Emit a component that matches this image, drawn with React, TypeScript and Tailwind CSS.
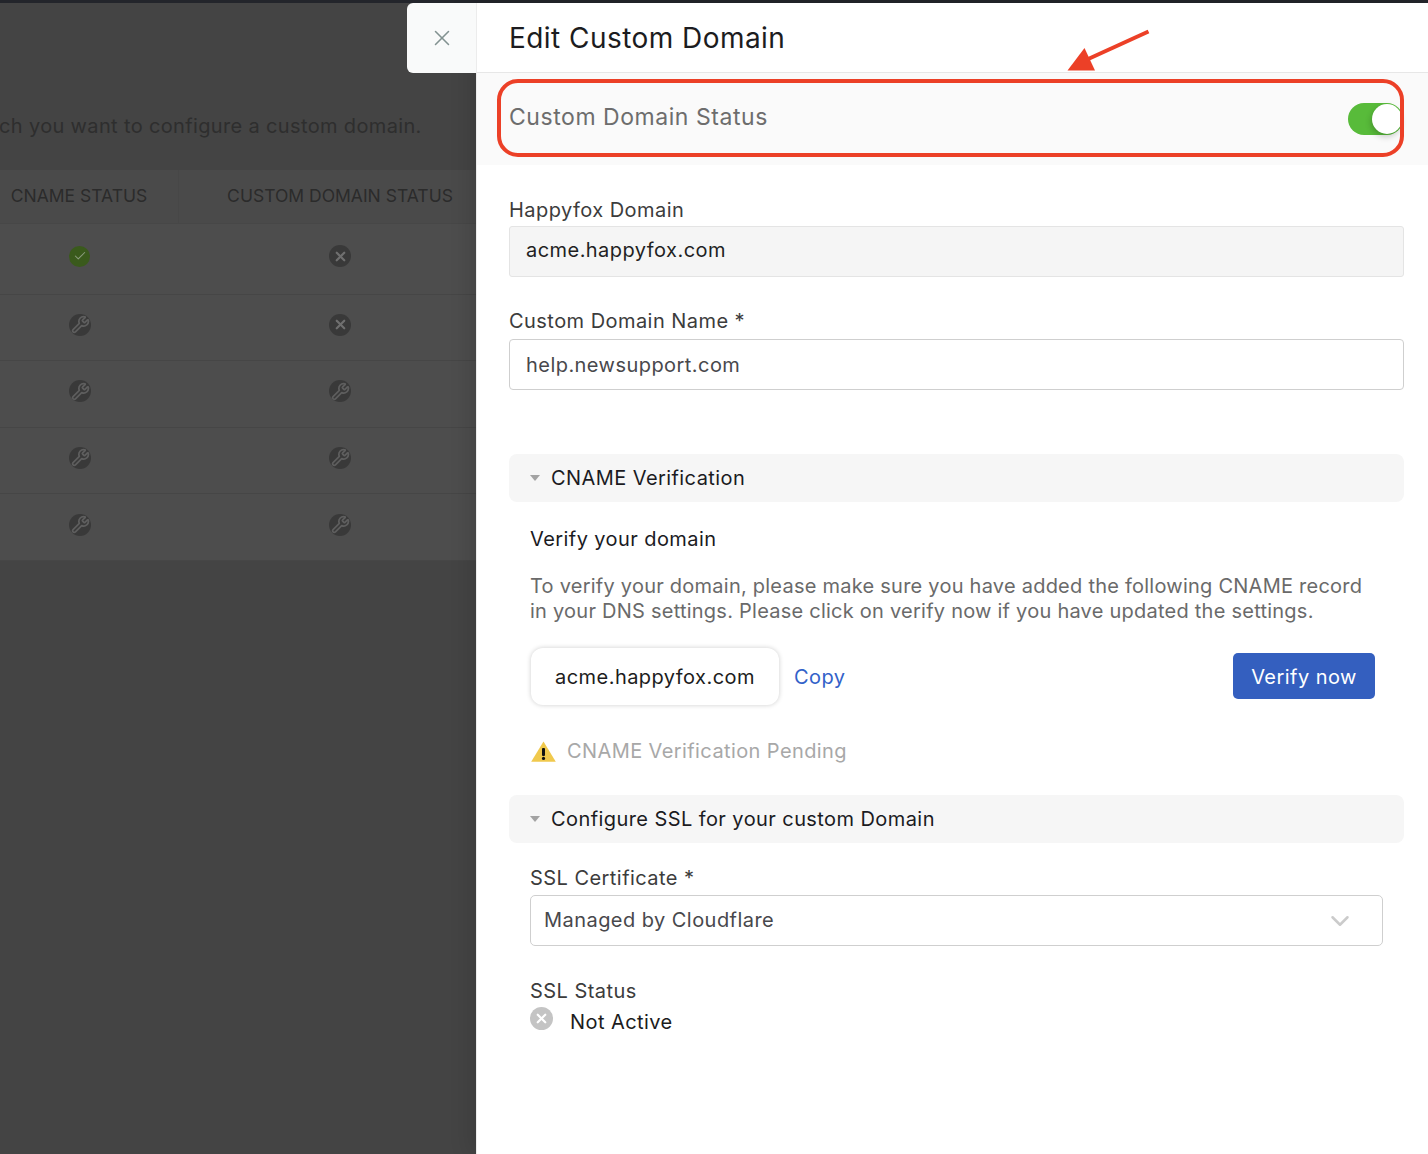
import { Check, ChevronDown, Wrench, X } from 'lucide-react';

const rows = [
  { cname: 'ok', domain: 'off' },
  { cname: 'setup', domain: 'off' },
  { cname: 'setup', domain: 'setup' },
  { cname: 'setup', domain: 'setup' },
  { cname: 'setup', domain: 'setup' },
];

function StatusIcon({ kind }: { kind: string }) {
  if (kind === 'ok') {
    return (
      <span className="mr-px flex size-[21px] items-center justify-center rounded-full bg-[#3a5a1c]">
        <Check className="size-[14px] text-[#8b9c7d]" strokeWidth={1.8} />
      </span>
    );
  }
  if (kind === 'off') {
    return (
      <span className="flex size-[22px] items-center justify-center rounded-full bg-[#393939]">
        <X className="size-[15px] text-[#6f6f6f]" strokeWidth={3.5} />
      </span>
    );
  }
  return (
    <span className="flex size-[22px] items-center justify-center overflow-hidden rounded-full bg-[#393939]">
      <Wrench className="size-[19px] text-[#5e5e5e]" strokeWidth={2.2} />
    </span>
  );
}

function Backdrop() {
  return (
    <div className="flex h-full w-[476px] shrink-0 flex-col overflow-hidden bg-[#444444]">
      <div className="flex h-[167px] shrink-0 items-start overflow-hidden pt-[110px] text-[20px] leading-[26px] tracking-[0.35px] whitespace-nowrap text-[#2e2e2e]">
        <span className="ml-[-1px]">ch you want to configure a custom domain.</span>
      </div>
      <div className="flex h-[54px] shrink-0 border-b border-[#474747] bg-[#4a4a4a] text-[17.5px] text-[#2b2b2b]">
        <div className="flex w-[179px] shrink-0 items-center justify-center border-r border-[#474747] pr-[20px]">CNAME STATUS</div>
        <div className="flex w-[322px] shrink-0 items-center justify-center whitespace-nowrap">CUSTOM DOMAIN STATUS</div>
      </div>
      {rows.map((row, i) => (
        <div
          key={i}
          className={`grid shrink-0 grid-cols-[160px_360px] items-center border-b border-[#464646] bg-[#4d4d4d] pb-[5px] ${i === 0 ? 'h-[70.5px]' : 'h-[66.6px]'}`}
        >
          <div className="flex justify-center">
            <StatusIcon kind={row.cname} />
          </div>
          <div className="flex justify-center">
            <StatusIcon kind={row.domain} />
          </div>
        </div>
      ))}
    </div>
  );
}

function FieldLabel({ children }: { children: React.ReactNode }) {
  return <div className="text-[20px] leading-[26px] tracking-[0.45px] text-[#3c3c3c]">{children}</div>;
}

function SectionHeader({ title }: { title: string }) {
  return (
    <div className="flex h-12 items-center rounded-lg bg-[#f6f6f6] pl-[21px] text-[20px] tracking-[0.42px] text-[#1b1b1f]">
      <span className="mr-[11px] h-0 w-0 border-x-[5.5px] border-t-[6px] border-x-transparent border-t-[#a3a3a3]" />
      {title}
    </div>
  );
}

function Panel() {
  return (
    <div className="relative flex h-full flex-1 flex-col border-l border-[#ececec] bg-white shadow-[-6px_0_20px_rgba(0,0,0,0.12)]">
      <div className="flex h-[70px] shrink-0 items-center border-b border-[#e7e7e7] pl-[32px] text-[28px] tracking-[0.45px] text-[#1c1c20]">
        Edit Custom Domain
      </div>
      <div className="flex h-[92px] shrink-0 items-center justify-between bg-[#fafafa] pr-[25px] pl-[32px] text-[23px] tracking-[0.55px] text-[#6d6d6d]">
        <span className="mt-[-4px]">Custom Domain Status</span>
        <span className="relative h-8 w-[55px] rounded-full bg-[#58bb3a]">
          <span className="absolute top-[1px] right-[1px] size-[30px] rounded-full bg-white shadow-[-1px_3px_6px_rgba(0,0,0,0.2)]" />
        </span>
      </div>

      <div className="flex flex-1 flex-col pr-6 pl-[32px]">
        <div className="mt-[32px]">
          <FieldLabel>Happyfox Domain</FieldLabel>
        </div>
        <div className="mt-[3px] flex h-[51px] items-center rounded-[3px] border border-[#e4e4e4] bg-[#f5f5f5] pb-[3px] pl-4 text-[20px] tracking-[0.45px] text-[#1f1f23]">
          acme.happyfox.com
        </div>
        <div className="mt-[31px]">
          <FieldLabel>Custom Domain Name *</FieldLabel>
        </div>
        <div className="mt-[5px] flex h-[51px] items-center rounded-[4px] border border-[#cfcfcf] pl-4 text-[20px] tracking-[0.45px] text-[#48484c]">
          help.newsupport.com
        </div>

        <div className="mt-[64px]">
          <SectionHeader title="CNAME Verification" />
        </div>
        <div className="px-[21px]">
          <div className="mt-[23px] text-[20px] leading-[28px] tracking-[0.42px] text-[#1b1b1f]">Verify your domain</div>
          <p className="mt-[21px] text-[20px] leading-[25px] tracking-[0.24px] text-[#6a6a6a]">
            To verify your domain, please make sure you have added the following CNAME record in your DNS settings. Please click on verify now if you have updated the settings.
          </p>
          <div className="mt-[23px] flex h-[58px] items-center">
            <div className="ml-px flex h-[57px] w-[248px] items-center justify-center rounded-[12px] bg-white pt-[2px] text-[20px] tracking-[0.45px] text-[#1c1c20] shadow-[0_0_5px_rgba(0,0,0,0.2)]">
              acme.happyfox.com
            </div>
            <span className="mt-[2px] ml-[15px] text-[20px] tracking-[0.45px] text-[#3261c9]">Copy</span>
            <button className="mr-[8px] ml-auto h-[46px] w-[142px] rounded-[5px] bg-[#345fbf] pt-[2px] text-[20px] tracking-[0.45px] text-white">
              Verify now
            </button>
          </div>
          <div className="mt-[32px] flex h-[28px] items-center text-[20px] tracking-[0.4px] text-[#a8a8a8]">
            <svg width="25" height="21" viewBox="0 0 25 21" className="mr-[11px] ml-px">
              <path d="M12.5 0.5 L24.8 20.8 H0.2 Z" fill="#f0c94d" />
              <rect x="11" y="7" width="3" height="8" rx="1" fill="#111" />
              <circle cx="12.5" cy="17.4" r="1.6" fill="#111" />
            </svg>
            CNAME Verification Pending
          </div>
        </div>

        <div className="mt-[30px]">
          <SectionHeader title="Configure SSL for your custom Domain" />
        </div>
        <div className="px-[21px]">
          <div className="mt-[22px]">
            <FieldLabel>SSL Certificate *</FieldLabel>
          </div>
          <div className="mt-[4px] flex h-[51px] items-center justify-between rounded-[5px] border border-[#cfcfcf] pr-[27px] pl-[13px] text-[20px] tracking-[0.45px] text-[#48484c]">
            <span className="mt-[-2px]">Managed by Cloudflare</span>
            <ChevronDown className="size-[30px] text-[#cbcbcb]" strokeWidth={2} />
          </div>
          <div className="mt-[32px]">
            <FieldLabel>SSL Status</FieldLabel>
          </div>
          <div className="flex h-[32px] items-center text-[20px] tracking-[0.42px] text-[#1c1c20]">
            <span className="mt-[-3px] mr-[17px] flex size-[23px] items-center justify-center rounded-full bg-[#c4c4c4]">
              <X className="size-[15px] text-white" strokeWidth={3.5} />
            </span>
            <span className="mt-[3px]">Not Active</span>
          </div>
        </div>
      </div>
    </div>
  );
}

export default function App() {
  return (
    <div className="relative h-[1154px] w-[1428px] overflow-hidden font-['Inter',sans-serif]">
      <div className="h-[3px] bg-[#23252b]" />
      <div className="flex h-[1151px]">
        <Backdrop />
        <Panel />
      </div>

      {/* close tab sticks out of the panel */}
      <div className="absolute top-[3px] left-[407px] flex h-[70px] w-[69px] items-center justify-center rounded-l-[6px] bg-[#f9fafa]">
        <X className="size-[26px] text-[#829291]" strokeWidth={1.4} />
      </div>

      {/* annotation */}
      <div className="absolute top-[79px] left-[497px] h-[78px] w-[907px] rounded-[21px] border-[4px] border-[#ec4027]" />
      <svg className="absolute top-[28px] left-[1064px]" width="90" height="46" viewBox="0 0 90 46">
        <path d="M84.5 3.5 L22 32" stroke="#ec4027" strokeWidth="4" fill="none" />
        <path d="M3.5 42.5 L20.5 20 L31 42.5 Z" fill="#ec4027" />
      </svg>
    </div>
  );
}
